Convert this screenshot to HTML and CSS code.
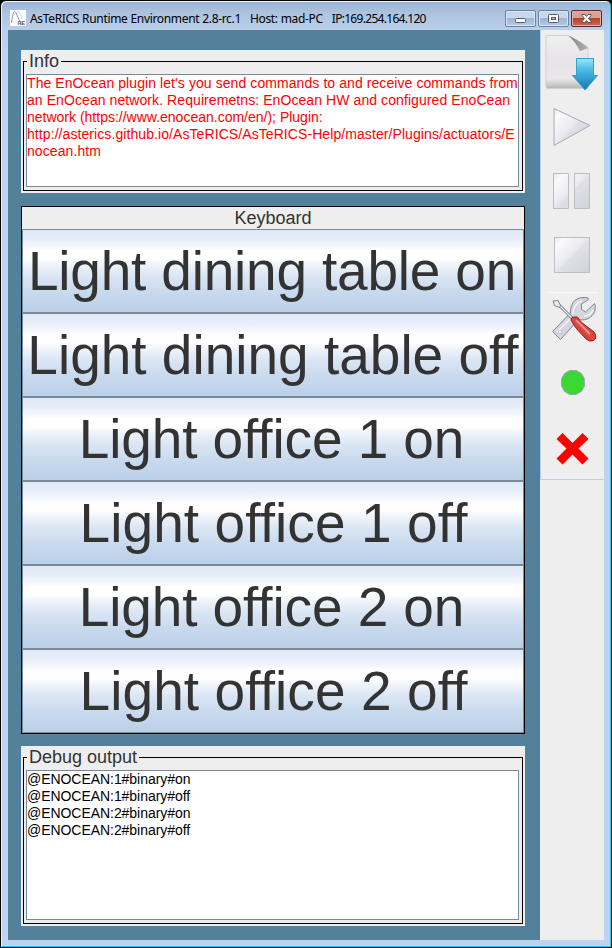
FILE: index.html
```html
<!DOCTYPE html>
<html lang="en">
<head>
<meta charset="utf-8">
<title>AsTeRICS Runtime Environment</title>
<link rel="stylesheet" href="styles.css">
</head>
<body>
<div class="window">
  <header class="titlebar">
    <svg class="app-icon" width="16" height="16" viewBox="0 0 16 16"><rect width="16" height="16" fill="#fff"/><path d="M1.500 13C2.500 7 3 2 4.500 1.500S8 9 12 15" fill="none" stroke="#8a9098"/><path d="M4 5C7 1 9 1 10 3s1 4 2 6" fill="none" stroke="#a8d4e4" stroke-width=".8"/><text x="7.500" y="15" class="icon-text">RE</text></svg>
    <span class="title">AsTeRICS Runtime Environment 2.8-rc.1 &nbsp; Host: mad-PC &nbsp;<span class="address">IP:169.254.164.120</span></span>
    <div class="controls">
      <div class="control"><svg width="29" height="15" viewBox="0 0 29 15"><rect x="9.500" y="7.500" width="10" height="4" rx="1" fill="#fff" stroke="#555b69"/></svg></div>
      <div class="control"><svg width="29" height="15" viewBox="0 0 29 15"><rect x="9.500" y="3.500" width="10" height="8" rx="1" fill="#fff" stroke="#555b69"/><rect x="12.500" y="6.500" width="4" height="2" fill="#a9bed8" stroke="#555b69"/></svg></div>
      <div class="control close"><svg width="29" height="15" viewBox="0 0 29 15"><path d="M10 3.500h3l1.500 2 1.500-2h3v1l-2.500 3 2.500 3v1h-3l-1.500-2-1.500 2h-3v-1l2.500-3-2.500-3z" fill="#fff" stroke="#5d4a52"/></svg></div>
    </div>
  </header>
  <div class="client">
    <main class="desktop">
      <section class="group info">
        <div class="legend"><span class="legend-text">Info</span></div>
        <div class="frame"><div class="output"><span class="wide">The EnOcean plugin let's you send commands to and receive commands from</span><br><span class="wide">an EnOcean network. Requiremetns: EnOcean HW and configured EnoCean</span><br>network (https://www.enocean.com/en/); Plugin:<br><span class="wide">http://asterics.github.io/AsTeRICS/AsTeRICS-Help/master/Plugins/actuators/E</span><br><span class="wide">nocean.htm</span></div></div>
      </section>
      <section class="keyboard">
        <h2 class="keyboard-title">Keyboard</h2>
        <button class="key tight">Light dining table on</button>
        <button class="key">Light dining table off</button>
        <button class="key snug">Light office 1 on</button>
        <button class="key loose">Light office 1 off</button>
        <button class="key snug">Light office 2 on</button>
        <button class="key loose">Light office 2 off</button>
      </section>
      <section class="group debug">
        <div class="legend"><span class="legend-text">Debug output</span></div>
        <div class="frame"><div class="output">@ENOCEAN:1#binary#on<br>@ENOCEAN:1#binary#off<br>@ENOCEAN:2#binary#on<br>@ENOCEAN:2#binary#off</div></div>
      </section>
    </main>
    <aside class="side">
      <svg class="toolbar" width="64" height="450" viewBox="540 30 64 450">
        <defs>
          <linearGradient id="page" x2="0" y2="1"><stop offset="0" stop-color="#f0efef"/><stop offset=".45" stop-color="#e7e4e8"/><stop offset=".82" stop-color="#e9e7ea"/><stop offset="1" stop-color="#b5b5b8"/></linearGradient>
          <linearGradient id="arrow" x2="0" y2="1"><stop offset="0" stop-color="#9be6fd"/><stop offset=".35" stop-color="#4cbce6"/><stop offset="1" stop-color="#1276b5"/></linearGradient>
          <linearGradient id="fold"><stop offset="0" stop-color="#858585"/><stop offset="1" stop-color="#b2b2b2"/></linearGradient>
          <linearGradient id="glass" x2="1" y2="1"><stop offset="0" stop-color="#e5e5ec"/><stop offset=".15" stop-color="#fafafc"/><stop offset=".48" stop-color="#e9e9ef"/><stop offset=".54" stop-color="#dfdfe7"/><stop offset="1" stop-color="#d2d2dc"/></linearGradient>
          <linearGradient id="red" x1="0" y1="1" x2="1" y2="0"><stop offset="0" stop-color="#bd1519"/><stop offset=".5" stop-color="#e04a44"/><stop offset="1" stop-color="#c81c1d"/></linearGradient>
        </defs>
        <path d="M540.500 30v449.500h63" fill="none" stroke="#b8cfe5"/>
        <path d="M547 35.500h21l20 13v39q0 1-2 1h-38q-2 0-2-2v-49q0-2 1-2z" fill="url(#page)" stroke="#cfcfd1"/>
        <path d="M568.500 35.500C574 38 585 44 588.500 48L580 51C577 45 574 41 568.500 35.500z" fill="url(#fold)"/>
        <path d="M576.500 58.500h17v17h4l-12.500 14.500-12.500-14.500h4z" fill="url(#arrow)" stroke="#319fce"/>
        <path d="M554 108.500v37l36-20z" fill="url(#glass)" stroke="#aaaaad" stroke-linejoin="round"/>
        <path d="M553.500 173.500h15v35h-15zM574.500 173.500h15v35h-15z" fill="url(#glass)" stroke="#bcbcc1"/>
        <rect x="554.500" y="237.500" width="35" height="35" fill="url(#glass)" stroke="#bdbdc2"/>
        <path d="M549 292.500h49" stroke="#fafafa"/>
        <path d="M552.500 331.500L570.500 313C570 302 577 295.500 588 298L588.500 299.500 581.500 304V309.500L585.500 312 594.500 303.500C598 312 590 322 578.500 319.500L560.500 339.500z" fill="#d5d5df" stroke="#858691" stroke-linejoin="round"/>
        <path d="M557 332l13-13M573 314c0-7 4-12 9-13M584 316c5 0 8-3 9-6" fill="none" stroke="#f4f4f8" stroke-width="1.500"/>
        <circle cx="560" cy="332" r="1.800" fill="#f2f2f5" stroke="#c2c2cc"/>
        <path d="M559 305l15 15" stroke="#6f7886" stroke-width="3"/><path d="M558.500 304.500l15 15" stroke="#eef2f6" stroke-width="1.300"/>
        <path d="M553 301l5-.5 2.500 5-1 2-5-2z" fill="#e6e9ef" stroke="#798696"/>
        <path d="M571 320q0-3 3-3h3.500l3.500 5 13 10q4 6-.5 8.500-4 2-8-2l-10-11z" fill="url(#red)" stroke="#a61918"/>
        <path d="M576 320l14 14" stroke="#ffc3b9" stroke-width="2" opacity=".6"/>
        <path d="M569.500 370.500h7l5 3 3 5.500v7l-3 5.500-5.500 3h-6.500l-5-3-3-5.500v-7l3-5.500z" fill="#3bd833" stroke="#9da9c0"/>
        <path d="M562.500 433l10 10 10-10 6 6-10 9.500 10 10-6 6-10-10-10 10-6-6 10-10-10-9.500z" fill="#f00"/>
      </svg>
    </aside>
  </div>
</div>
</body>
</html>
```
FILE: styles.css
```css
* { box-sizing: border-box; }
body { margin: 0; width: 612px; height: 948px; overflow: hidden; background: #000; font-family: "Liberation Sans", Arial, sans-serif; }
.window {
  width: 612px; height: 948px; padding: 0 6px 6px;
  border: 1px solid #000; border-radius: 6px 6px 0 0;
  background: linear-gradient(#98b2d3 0, #adc3df 12px, #b9cfea 29px, #bed3ef 60px, #bed3f0 100%);
  box-shadow: inset 1px 1px #eff5ff, inset -1px -1px #23cbe8;
}
.titlebar { height: 29px; display: flex; align-items: flex-start; padding: 9px 3px 0; }
.app-icon { flex: none; }
.icon-text { font: bold 5.5px "Liberation Sans", sans-serif; fill: #5c6168; }
.title { flex: 1; margin-left: 4px; font: 12px/18px "Noto Sans", "Open Sans", sans-serif; letter-spacing: -0.33px; word-spacing: 0.2px; white-space: nowrap; color: #000; }
.address { margin-left: 3px; letter-spacing: -0.7px; }
.controls { display: flex; gap: 2px; }
.control { width: 31px; height: 17px; border: 1px solid #6681a4; border-radius: 2px; background: linear-gradient(#c7d8ec 45%, #9db6d2 50%, #b5cbe3); box-shadow: inset 0 0 0 1px #d7e5f5; }
.control svg { display: block; }
.control.close { border-color: #5c2630; background: linear-gradient(#dda094 45%, #b8402b 50%, #ca6b55); box-shadow: inset 0 0 0 1px #e5afa5; }
.client { display: flex; width: 596px; height: 910px; margin-left: 1px; }
.desktop { width: 532px; padding: 20px 15px 0 13px; background: #53819b; }
.group { display: flex; flex-direction: column; padding: 0 2px 2px; background: #eee; }
.info { height: 143px; }
.debug { height: 180px; margin-top: 12px; }
.legend { height: 23px; margin-bottom: -12px; display: flex; align-items: center; z-index: 1; }
.legend-text { margin: 0 0 2px 4px; padding: 0 2px; background: #eee; color: #333; font-size: 18px; line-height: 20px; }
.frame { flex: 1; border: 1px solid #000; padding: 12px 3px 3px 2px; }
.output { height: 100%; border: 1px solid #7a8a99; background: #fff; font-size: 14px; line-height: 17px; white-space: nowrap; overflow: hidden; color: #000; }
.info .output { color: #f00; }
.wide { letter-spacing: 0.08px; }
.debug .output { letter-spacing: -0.05px; }
.keyboard { height: 528px; margin-top: 13px; border: 1px solid #000; background: #eee; }
.keyboard-title { height: 22px; margin: 0; text-align: center; font-size: 18px; font-weight: normal; line-height: 22px; color: #333; }
.key {
  display: block; width: 502px; height: 84px; margin: 0; padding: 0; border: 1px solid #7a8a99;
  background: linear-gradient(#dfe8f4 0, #e9effa 10px, #f3f6fd 16px, #fff 20px, #fff 28px, #e9eff8 38px, #d8e4f3 48px, #c5d7ec 66px, #c3d6eb 72px, #b8cfe5 100%);
  font: 55px/80px "Liberation Sans", Arial, sans-serif; color: #333; white-space: nowrap;
}
.tight { padding-right: 2px; letter-spacing: -0.2px; }
.snug { padding-right: 3px; letter-spacing: -0.1px; }
.loose { padding-left: 1px; letter-spacing: 0.1px; }
.side { width: 64px; background: #eee; }
.toolbar { display: block; }
```
